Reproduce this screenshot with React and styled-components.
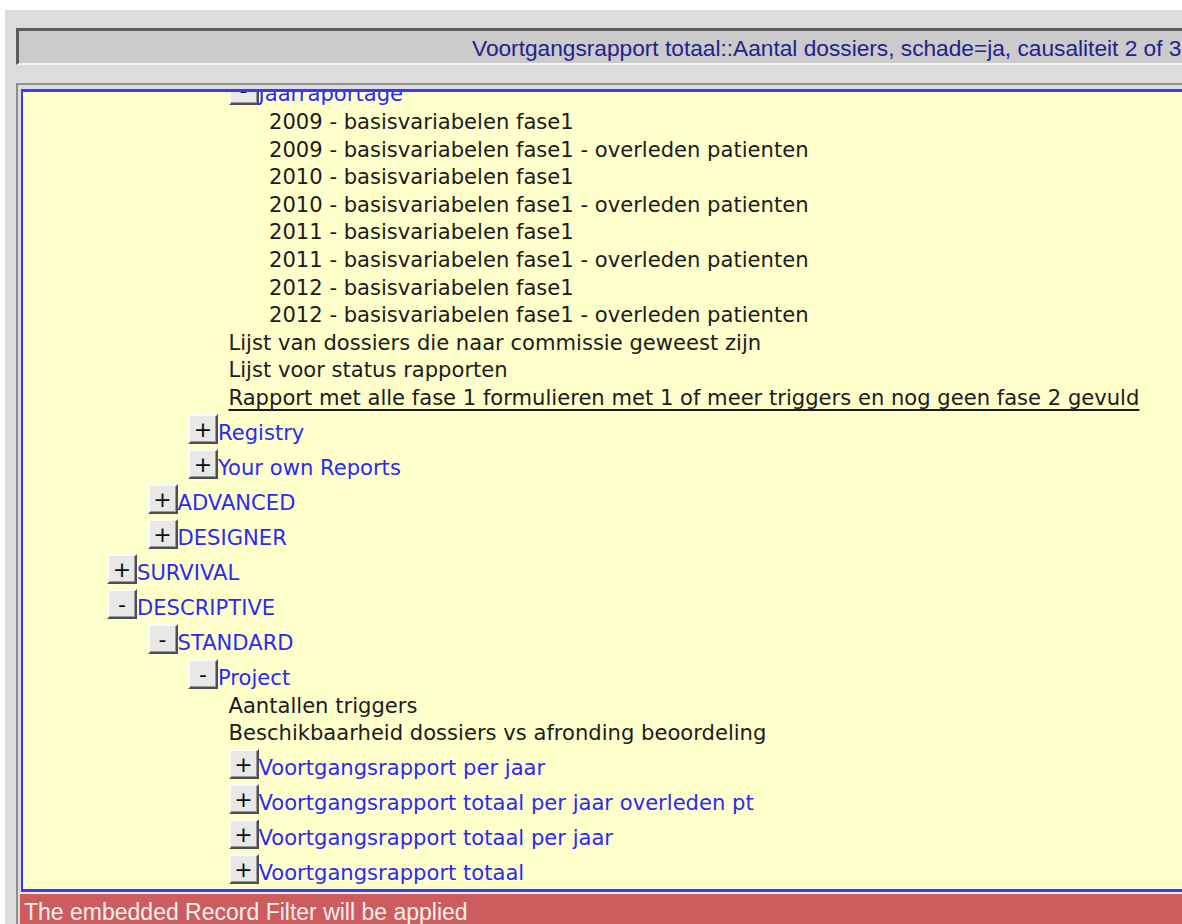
import React from "react"
import styled, { createGlobalStyle } from "styled-components"

const GlobalStyle = createGlobalStyle`
  html, body {
    margin: 0;
    padding: 0;
    background: #ffffff;
    overflow: hidden;
  }
`

const tree = [
  { level: 3, type: "node", open: true, label: "Jaarraportage" },
  { level: 4, type: "leaf", label: "2009 - basisvariabelen fase1" },
  { level: 4, type: "leaf", label: "2009 - basisvariabelen fase1 - overleden patienten" },
  { level: 4, type: "leaf", label: "2010 - basisvariabelen fase1" },
  { level: 4, type: "leaf", label: "2010 - basisvariabelen fase1 - overleden patienten" },
  { level: 4, type: "leaf", label: "2011 - basisvariabelen fase1" },
  { level: 4, type: "leaf", label: "2011 - basisvariabelen fase1 - overleden patienten" },
  { level: 4, type: "leaf", label: "2012 - basisvariabelen fase1" },
  { level: 4, type: "leaf", label: "2012 - basisvariabelen fase1 - overleden patienten" },
  { level: 3, type: "leaf", label: "Lijst van dossiers die naar commissie geweest zijn" },
  { level: 3, type: "leaf", label: "Lijst voor status rapporten" },
  {
    level: 3,
    type: "leaf",
    hover: true,
    label: "Rapport met alle fase 1 formulieren met 1 of meer triggers en nog geen fase 2 gevuld",
  },
  { level: 2, type: "node", label: "Registry" },
  { level: 2, type: "node", label: "Your own Reports" },
  { level: 1, type: "node", label: "ADVANCED" },
  { level: 1, type: "node", label: "DESIGNER" },
  { level: 0, type: "node", label: "SURVIVAL" },
  { level: 0, type: "node", open: true, label: "DESCRIPTIVE" },
  { level: 1, type: "node", open: true, label: "STANDARD" },
  { level: 2, type: "node", open: true, label: "Project" },
  { level: 3, type: "leaf", label: "Aantallen triggers" },
  { level: 3, type: "leaf", label: "Beschikbaarheid dossiers vs afronding beoordeling" },
  { level: 3, type: "node", label: "Voortgangsrapport per jaar" },
  { level: 3, type: "node", label: "Voortgangsrapport totaal per jaar overleden pt" },
  { level: 3, type: "node", label: "Voortgangsrapport totaal per jaar" },
  { level: 3, type: "node", label: "Voortgangsrapport totaal" },
]

const ReportBrowser = () => {
  return (
    <Screen>
      <GlobalStyle />
      <TitleBar>
        Voortgangsrapport totaal::Aantal dossiers, schade=ja, causaliteit 2 of 3 (alle jaren)
      </TitleBar>
      <TreeFrame>
        <TreePane>
          <TreeList>
            {tree.map((item, i) =>
              item.type === "node" ? (
                <NodeRow key={i} $level={item.level}>
                  <Toggle type="button">{item.open ? "-" : "+"}</Toggle>
                  <NodeLabel>{item.label}</NodeLabel>
                </NodeRow>
              ) : (
                <LeafRow key={i} $level={item.level} $hover={item.hover}>
                  {item.label}
                </LeafRow>
              )
            )}
          </TreeList>
        </TreePane>
        <Notice>The embedded Record Filter will be applied</Notice>
      </TreeFrame>
    </Screen>
  )
}

export default ReportBrowser

const indent = level => 84 + level * 40.5

const Screen = styled.div`
  margin: 10px 0 0 5px;
  width: 1500px;
  height: 914px;
  padding: 18px 0 0 11px;
  box-sizing: border-box;
  background: #dcdcdc;
`

const TitleBar = styled.div`
  height: 32px;
  padding-left: 453px;
  border-top: 3px solid #5c5c5c;
  border-left: 3px solid #5c5c5c;
  border-bottom: 2px solid #f3f3f3;
  background: #cbcbcb;
  color: #22228c;
  font-family: "Liberation Sans", Arial, sans-serif;
  font-size: 22.7px;
  line-height: 34px;
  white-space: nowrap;
  overflow: hidden;
`

const TreeFrame = styled.div`
  margin-top: 18px;
  padding: 4px 0 0 3px;
  border-top: 2px solid #8e8e8e;
  border-left: 2px solid #8e8e8e;
`

const TreePane = styled.div`
  height: 797px;
  overflow: hidden;
  border: 3px solid #3838ff;
  border-left-width: 2px;
  background: #ffffcc;
`

/* scrolled so the Jaarraportage row sits half under the top edge */
const TreeList = styled.div`
  margin-top: -19px;
  font-family: "DejaVu Sans", Verdana, sans-serif;
  font-size: 21.1px;
  white-space: nowrap;
`

const NodeRow = styled.div`
  display: flex;
  align-items: flex-start;
  height: 35px;
  padding-left: ${p => indent(p.$level)}px;
`

const Toggle = styled.button`
  width: 30px;
  height: 30px;
  margin-top: 2px;
  padding: 0;
  flex: none;
  box-sizing: border-box;
  border: 2px solid;
  border-color: #fbfbfb #4e4e4e #4e4e4e #fbfbfb;
  box-shadow: inset -1px -1px 0 #9a9a9a;
  background: #e8e8e8;
  color: #0c0c0c;
  font-family: "DejaVu Sans", Verdana, sans-serif;
  font-size: 22px;
  line-height: 27px;
`

const NodeLabel = styled.span`
  margin-top: 7px;
  line-height: 28px;
  color: #2b2bf2;
`

const LeafRow = styled.div`
  height: 27.6px;
  line-height: 27.6px;
  padding-left: ${p => indent(p.$level)}px;
  color: #1c1c1c;
  text-decoration: ${p => (p.$hover ? "underline" : "none")};
  text-underline-offset: 4px;
`

const Notice = styled.div`
  height: 40px;
  margin-left: -1px;
  padding-left: 4px;
  border-top: 2px solid #f0eaea;
  background: #cd5c5c;
  color: #fff0f0;
  font-family: "Liberation Sans", Arial, sans-serif;
  font-size: 23px;
  line-height: 37px;
  white-space: nowrap;
`
